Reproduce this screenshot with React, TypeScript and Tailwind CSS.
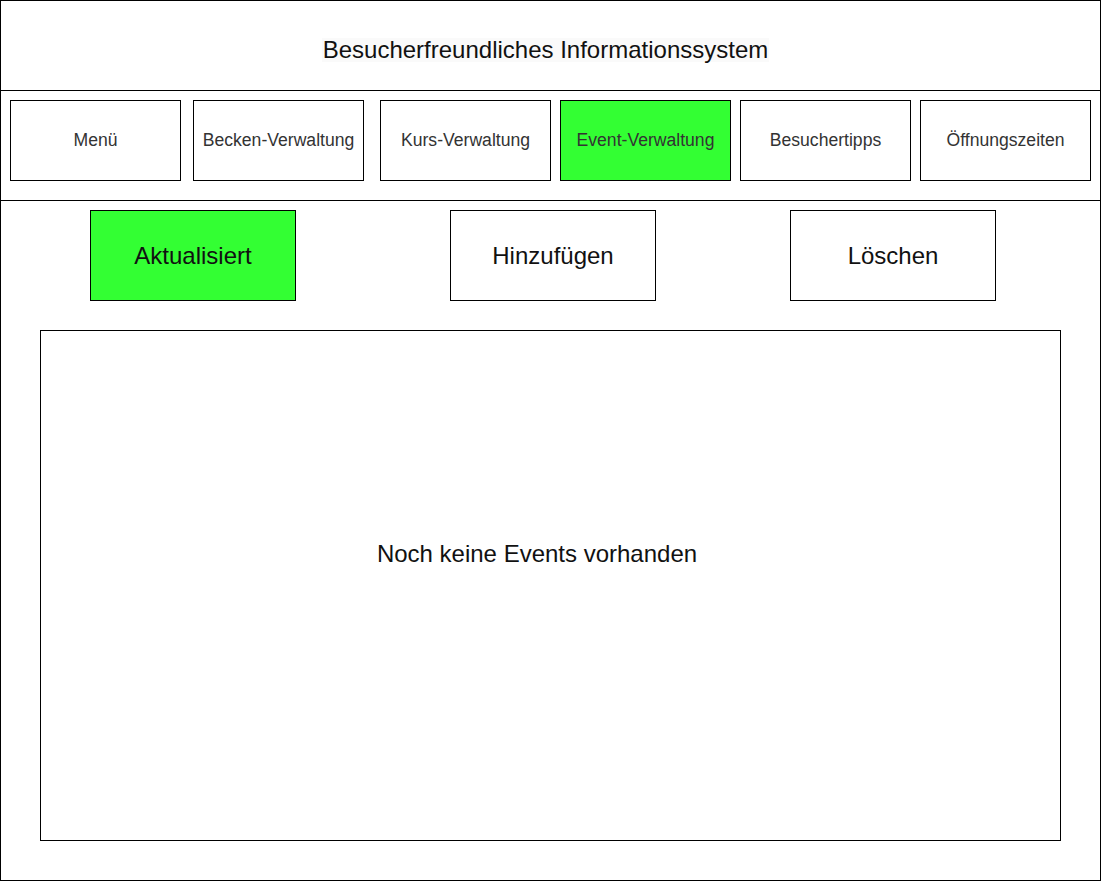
import React from 'react';

const navItems = [
  { label: 'Menü', ml: 'ml-[9px]', active: false },
  { label: 'Becken-Verwaltung', ml: 'ml-[12px]', active: false },
  { label: 'Kurs-Verwaltung', ml: 'ml-[16px]', active: false },
  { label: 'Event-Verwaltung', ml: 'ml-[9px]', active: true },
  { label: 'Besuchertipps', ml: 'ml-[9px]', active: false },
  { label: 'Öffnungszeiten', ml: 'ml-[9px]', active: false },
];

const actions = [
  { label: 'Aktualisiert', ml: 'ml-[89px]', active: true },
  { label: 'Hinzufügen', ml: 'ml-[154px]', active: false },
  { label: 'Löschen', ml: 'ml-[134px]', active: false },
];

const App: React.FC = () => {
  return (
    <div className="w-[1101px] h-[881px] border border-black bg-white font-['Liberation_Sans',Arial,sans-serif] flex flex-col">
      <header className="h-[90px] border-b border-black flex justify-center pt-[37px] pr-[10px]">
        <span className="h-[24px] px-[1px] text-[24px] leading-[24px] text-[#111] bg-[#fafafa]">
          Besucherfreundliches Informationssystem
        </span>
      </header>

      <nav className="h-[110px] border-b border-black flex items-start pt-[9px]">
        {navItems.map((item) => (
          <div
            key={item.label}
            className={`${item.ml} w-[171px] h-[81px] border border-black flex items-center justify-center text-[17.6px] text-[#333] ${
              item.active ? 'bg-[#33ff33] text-[#222]' : 'bg-white'
            }`}
          >
            {item.label}
          </div>
        ))}
      </nav>

      <div className="flex pt-[9px]">
        {actions.map((a) => (
          <button
            key={a.label}
            className={`${a.ml} w-[206px] h-[91px] border border-black flex items-center justify-center text-[24px] text-[#111] ${
              a.active ? 'bg-[#33ff33]' : 'bg-white'
            }`}
          >
            {a.label}
          </button>
        ))}
      </div>

      <div className="ml-[39px] mt-[29px] w-[1021px] h-[511px] border border-black flex justify-center pt-[211px] pr-[27px]">
        <p className="h-[24px] text-[24px] leading-[24px] text-[#111]">Noch keine Events vorhanden</p>
      </div>
    </div>
  );
};

export default App;
